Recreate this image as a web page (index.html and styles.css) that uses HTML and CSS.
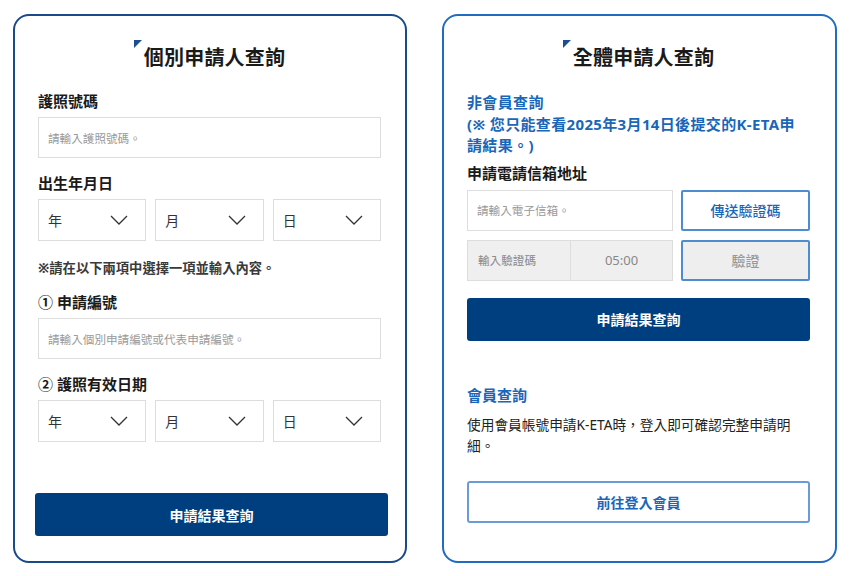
FILE: index.html
```html
<!DOCTYPE html>
<html lang="zh-Hant">
<head>
  <meta charset="UTF-8">
  <meta name="viewport" content="width=device-width, initial-scale=1.0">
  <title>申請結果查詢</title>
  <link rel="stylesheet" href="styles.css">
</head>
<body>

<div class="wrap">
  <!-- individual lookup -->
  <div class="card card-left">
    <h2 class="title"><span>個別申請人查詢</span></h2>

    <div class="label first">護照號碼</div>
    <div class="field"><span class="ph">請輸入護照號碼。</span></div>

    <div class="label">出生年月日</div>
    <div class="selects">
      <div class="select">年<svg viewBox="0 0 18 10"><polyline points="1,1 9,9 17,1"/></svg></div>
      <div class="select">月<svg viewBox="0 0 18 10"><polyline points="1,1 9,9 17,1"/></svg></div>
      <div class="select">日<svg viewBox="0 0 18 10"><polyline points="1,1 9,9 17,1"/></svg></div>
    </div>

    <div class="note">※請在以下兩項中選擇一項並輸入內容。</div>

    <div class="label tight">① 申請編號</div>
    <div class="field"><span class="ph">請輸入個別申請編號或代表申請編號。</span></div>

    <div class="label">② 護照有效日期</div>
    <div class="selects">
      <div class="select">年<svg viewBox="0 0 18 10"><polyline points="1,1 9,9 17,1"/></svg></div>
      <div class="select">月<svg viewBox="0 0 18 10"><polyline points="1,1 9,9 17,1"/></svg></div>
      <div class="select">日<svg viewBox="0 0 18 10"><polyline points="1,1 9,9 17,1"/></svg></div>
    </div>

    <button class="btn-main btn-left">申請結果查詢</button>
  </div>

  <!-- group lookup -->
  <div class="card card-right">
    <h2 class="title"><span>全體申請人查詢</span></h2>

    <div class="blue-head notice">非會員查詢<br>(※ 您只能查看2025年3月14日後提交的K-ETA申請結果。)</div>

    <div class="label mail">申請電請信箱地址</div>
    <div class="row">
      <div class="field grow"><span class="ph">請輸入電子信箱。</span></div>
      <button class="btn-line">傳送驗證碼</button>
    </div>
    <div class="row second">
      <div class="code-group">
        <span class="ph code">輸入驗證碼</span>
        <span class="timer">05:00</span>
      </div>
      <button class="btn-line disabled">驗證</button>
    </div>

    <button class="btn-main btn-right">申請結果查詢</button>

    <div class="blue-head member">會員查詢</div>
    <p class="desc">使用會員帳號申請K-ETA時，登入即可確認完整申請明細。</p>

    <button class="btn-outline">前往登入會員</button>
  </div>
</div>

</body>
</html>
```

FILE: styles.css
```css
body {
  margin: 0;
  background-color: #fff;
  font-family: "Noto Sans", "Noto Sans CJK TC", sans-serif;
  color: #222;
}

.wrap {
  display: flex;
  gap: 35px;
  padding: 14px 13px;
}

.card {
  box-sizing: border-box;
  width: 394px;
  height: 549px;
  border: 2px solid #1b4a88;
  border-radius: 16px;
  padding: 28px 24px 25px 23px;
  display: flex;
  flex-direction: column;
}

.card-right {
  width: 395px;
  border-color: #1f6cc0;
  padding: 28px 25px 38px 23px;
}

.title {
  margin: 0;
  text-align: center;
  font-size: 20px;
  line-height: 28px;
  font-weight: 700;
  color: #1a1a1a;
  letter-spacing: 0.2px;
}

.title span {
  position: relative;
  display: inline-block;
  padding-left: 10px;
}

/* little corner mark before the heading */
.title span::before {
  content: "";
  position: absolute;
  left: 0;
  top: -4px;
  width: 0;
  height: 0;
  border-top: 8px solid #1b4f92;
  border-right: 8px solid transparent;
}

.label {
  font-size: 15px;
  line-height: 20px;
  font-weight: 700;
  color: #1a1a1a;
  margin: 15px 0 6px;
}

.label.first {
  margin-top: 19px;
}

.label.tight {
  margin-top: 14px;
}

.field {
  box-sizing: border-box;
  height: 41px;
  border: 1px solid #ddd;
  display: flex;
  align-items: center;
  padding: 0 9px;
}

.ph {
  font-size: 11.6px;
  color: #999;
}

.selects {
  display: flex;
  gap: 9px;
}

.select {
  box-sizing: border-box;
  flex: 1;
  height: 42px;
  border: 1px solid #ddd;
  display: flex;
  align-items: center;
  justify-content: space-between;
  padding: 0 17px 0 9px;
  font-size: 14px;
  color: #333;
}

.select svg {
  width: 18px;
  height: 10px;
  fill: none;
  stroke: #333;
  stroke-width: 1.3;
}

.note {
  margin-top: 17px;
  font-size: 13.3px;
  line-height: 20px;
  font-weight: 700;
  color: #3a3a3a;
}

.btn-main {
  margin-top: auto;
  height: 43px;
  border: none;
  border-radius: 3px;
  background-color: #003f7f;
  color: #fff;
  font-family: inherit;
  font-size: 14px;
  font-weight: 700;
}

.btn-left {
  margin-left: -3px;
  margin-right: -7px;
}

.btn-right {
  margin-top: 17px;
}

.blue-head {
  margin-top: 20px;
  font-size: 15px;
  line-height: 21.5px;
  font-weight: 700;
  color: #1a66b8;
}

.blue-head.notice {
  letter-spacing: 0.35px;
}

.label.mail {
  margin-top: 6px;
  margin-bottom: 7px;
}

.row {
  display: flex;
  gap: 8px;
  height: 41px;
}

.row.second {
  margin-top: 9px;
}

.grow {
  flex: 1;
}

.btn-line {
  box-sizing: border-box;
  width: 129px;
  border: 2px solid #4f8ccf;
  border-radius: 2px;
  background-color: #fff;
  color: #1a66b8;
  font-family: inherit;
  font-size: 14px;
  font-weight: 500;
}

.btn-line.disabled {
  background-color: #eee;
  color: #999;
}

.code-group {
  flex: 1;
  display: flex;
  border: 1px solid #ddd;
  background-color: #efefef;
}

.code-group .code {
  box-sizing: border-box;
  width: 103px;
  border-right: 1px solid #ddd;
  display: flex;
  align-items: center;
  padding-left: 10px;
  color: #888;
}

.timer {
  flex: 1;
  display: flex;
  align-items: center;
  justify-content: center;
  font-size: 13px;
  color: #888;
}

.blue-head.member {
  margin-top: 44px;
}

.desc {
  margin: 8px 0 0;
  font-size: 13.7px;
  line-height: 21px;
  color: #222;
}

.btn-outline {
  margin-top: auto;
  height: 42px;
  border: 2px solid #6a9bd6;
  border-radius: 3px;
  background-color: #fff;
  color: #1a66b8;
  font-family: inherit;
  font-size: 14px;
  font-weight: 700;
}
```
